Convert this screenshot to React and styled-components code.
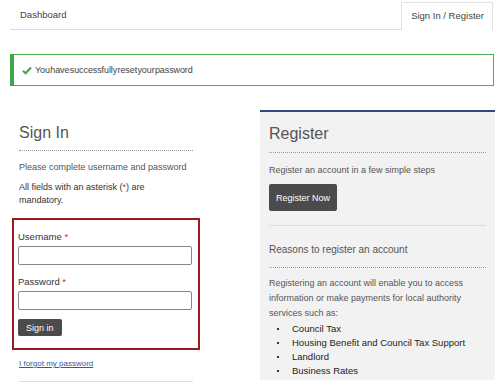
import React from 'react';
import styled, { createGlobalStyle } from 'styled-components';

const GlobalStyle = createGlobalStyle`
  html, body {
    margin: 0;
    padding: 0;
    background: #ffffff;
    font-family: "Liberation Sans", Arial, sans-serif;
  }
`;

const Page = styled.div`
  width: 500px;
  height: 392px;
  overflow: hidden;
`;

const Nav = styled.nav`
  display: flex;
  align-items: flex-end;
  margin: 0 7px 0 10px;
  height: 30px;
`;

const NavLink = styled.div`
  flex: ${p => (p.active ? '0 0 auto' : '1 1 auto')};
  height: ${p => (p.active ? '28px' : '29px')};
  box-sizing: border-box;
  display: flex;
  align-items: center;
  padding: ${p => (p.active ? '0 8px 2px 9px' : '0 0 2px 10px')};
  font-size: 9.5px;
  color: #444;
  border-bottom: ${p => (p.active ? 'none' : '1px solid #dcdcdc')};
  border-top: ${p => (p.active ? '1px solid #e2e2e2' : 'none')};
  border-left: ${p => (p.active ? '1px solid #e2e2e2' : 'none')};
  border-right: ${p => (p.active ? '1px solid #e2e2e2' : 'none')};
`;

const Alert = styled.div`
  margin: 24px 6px 0 10px;
  height: 32px;
  box-sizing: border-box;
  border: 1px solid #4db050;
  border-left: 4px solid #3fa844;
  display: flex;
  align-items: center;
  padding-left: 8px;
  gap: 3px;
  font-size: 9px;
  color: #444;
  word-spacing: -2px;
  letter-spacing: -0.1px;
`;

const Columns = styled.div`
  display: grid;
  grid-template-columns: 188px 235px;
  column-gap: 60px;
  align-items: start;
  margin: 24px 0 0 12px;
`;

const LeftCol = styled.div`
  display: flex;
  flex-direction: column;
  padding-top: 13px;
`;

const Inner = styled.div`
  padding: 0 7px;
`;

const Heading = styled.h2`
  margin: 0;
  font-size: 16px;
  line-height: 20px;
  font-weight: normal;
  color: #555;
  padding-bottom: ${p => p.pb || 7}px;
  border-bottom: 1px dotted #999;
`;

const SubHeading = styled.h3`
  margin: 0;
  font-size: 10px;
  line-height: 14px;
  font-weight: normal;
  color: #555;
  padding-bottom: 10px;
  border-bottom: 1px dotted #999;
`;

const Text = styled.p`
  margin: ${p => p.m || '0'};
  max-width: ${p => p.mw || 'none'};
  font-size: 9px;
  line-height: ${p => p.lh || 13}px;
  color: ${p => p.color || '#555'};
`;

const Req = styled.span`
  color: #c0392b;
`;

const FormBox = styled.form`
  margin-top: 11px;
  border: 2px solid #9c1a1c;
  padding: 10px 6px 12px 4px;
  display: flex;
  flex-direction: column;
`;

const Label = styled.label`
  font-size: 9.5px;
  line-height: 13px;
  color: #333;
  margin-bottom: 3px;
`;

const Input = styled.input`
  box-sizing: border-box;
  width: 174px;
  height: 19px;
  border: 1px solid #888;
  border-radius: 2px;
  background: #fff;
  margin-bottom: ${p => p.mb || 10}px;
  padding: 0 4px;
`;

const DarkButton = styled.button`
  align-self: flex-start;
  background: #4b4b4b;
  color: #fff;
  border: none;
  border-radius: 2px;
  font-family: inherit;
  font-size: ${p => p.fs || 9}px;
  height: ${p => p.h || 17}px;
  padding: 0 ${p => p.px || 8}px;
  cursor: pointer;
`;

const ButtonRow = styled.div`
  display: flex;
  margin-top: 7px;
`;

const ForgotLink = styled.a`
  display: block;
  margin-top: 8px;
  font-size: 8px;
  line-height: 12px;
  color: #2a5da8;
  text-decoration: underline;
`;

const Rule = styled.hr`
  margin: ${p => p.m || '0'};
  border: none;
  border-top: 1px solid #dcdcdc;
`;

const Panel = styled.section`
  background: #f2f2f2;
  border-top: 2px solid #2c4b7c;
  padding: 12px 9px 2px 9px;
`;

const List = styled.ul`
  margin: 1px 0 0 0;
  padding-left: 23px;
  list-style: none;
`;

const Item = styled.li`
  position: relative;
  font-size: 9.5px;
  line-height: 14px;
  color: #222;
  &::before {
    content: '';
    position: absolute;
    left: -15px;
    top: 6px;
    width: 2px;
    height: 2px;
    background: #333;
  }
`;

function Check() {
  return (
    <svg width="10" height="9" viewBox="0 0 10 9">
      <path d="M1 4.8 L3.6 7.3 L9 1.5" fill="none" stroke="#3fa844" strokeWidth="2" />
    </svg>
  );
}

export default function App() {
  return (
    <Page>
      <GlobalStyle />
      <Nav>
        <NavLink>Dashboard</NavLink>
        <NavLink active>Sign In / Register</NavLink>
      </Nav>
      <Alert>
        <Check />
        <span>You have successfully reset your password</span>
      </Alert>
      <Columns>
        <LeftCol>
          <Inner>
            <Heading>Sign In</Heading>
            <Text m="10px 0 0 0">Please complete username and password</Text>
            <Text m="7px 0 0 0" mw="150px" color="#333">
              All fields with an asterisk (<Req>*</Req>) are mandatory.
            </Text>
          </Inner>
          <FormBox onSubmit={e => e.preventDefault()}>
            <Label>
              Username <Req>*</Req>
            </Label>
            <Input type="text" />
            <Label>
              Password <Req>*</Req>
            </Label>
            <Input type="password" mb={9} />
            <DarkButton type="submit">Sign in</DarkButton>
          </FormBox>
          <Inner>
            <ForgotLink href="#">I forgot my password</ForgotLink>
            <Rule m="11px 0 0 0" />
          </Inner>
        </LeftCol>
        <Panel>
          <Heading pb={8}>Register</Heading>
          <Text m="11px 0 0 0">Register an account in a few simple steps</Text>
          <ButtonRow>
            <DarkButton h={27} px={7}>Register Now</DarkButton>
          </ButtonRow>
          <Rule m="14px 0 17px 0" />
          <SubHeading>Reasons to register an account</SubHeading>
          <Text m="8px 0 0 0" lh={15}>
            Registering an account will enable you to access information or make payments for local authority services such as:
          </Text>
          <List>
            <Item>Council Tax</Item>
            <Item>Housing Benefit and Council Tax Support</Item>
            <Item>Landlord</Item>
            <Item>Business Rates</Item>
          </List>
        </Panel>
      </Columns>
    </Page>
  );
}
